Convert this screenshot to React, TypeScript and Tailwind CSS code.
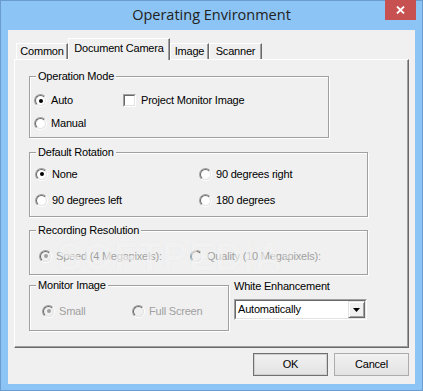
import React from "react";

function Radio({ checked = false, disabled = false }: { checked?: boolean; disabled?: boolean }) {
  return (
    <span className="inline-flex w-[13px] h-[13px] shrink-0 rounded-full border border-t-[#a0a0a0] border-l-[#a0a0a0] border-b-white border-r-white">
      <span
        className={
          disabled
            ? "flex-1 flex items-center justify-center rounded-full border border-t-[#696969] border-l-[#696969] border-b-[#e3e3e3] border-r-[#e3e3e3] bg-[#f0f0f0]"
            : "flex-1 flex items-center justify-center rounded-full border border-t-[#696969] border-l-[#696969] border-b-[#e3e3e3] border-r-[#e3e3e3] bg-white"
        }
      >
        {checked && (
          <span className={disabled ? "w-[4px] h-[4px] rounded-full bg-[#a0a0a0]" : "w-[4px] h-[4px] rounded-full bg-black"} />
        )}
      </span>
    </span>
  );
}

function RadioItem({ label, checked, disabled, className = "" }: { label: string; checked?: boolean; disabled?: boolean; className?: string }) {
  return (
    <div className={`flex items-center ${className}`}>
      <Radio checked={checked} disabled={disabled} />
      <span className={disabled ? "ml-[4px] text-[#a0a0a0]" : "ml-[4px]"}>{label}</span>
    </div>
  );
}

function Group({ title, className = "", children }: { title: string; className?: string; children?: React.ReactNode }) {
  return (
    <div className={`border border-[#a0a0a0] shadow-[inset_1px_1px_0_#fff,1px_1px_0_#fff] ${className}`}>
      <div className="-mt-[7px] ml-[6px] w-fit px-[2px] bg-[#f0f0f0] leading-[13px]">{title}</div>
      {children}
    </div>
  );
}

function Tab({ label, selected = false, w }: { label: string; selected?: boolean; w: string }) {
  if (selected) {
    return (
      <div
        className={`${w} h-[22px] -mb-[1px] relative z-10 bg-[#f0f0f0] border-t border-l border-white border-r border-r-[#696969] shadow-[inset_-1px_0_0_#a0a0a0] flex items-center justify-center pb-[2px]`}
      >
        {label}
      </div>
    );
  }
  return (
    <div
      className={`${w} h-[16px] bg-[#f0f0f0] border-t border-l border-white border-r border-r-[#696969] shadow-[inset_-1px_0_0_#a0a0a0] flex items-center justify-center`}
    >
      {label}
    </div>
  );
}

function Button({ label, isDefault = false }: { label: string; isDefault?: boolean }) {
  return (
    <div
      className={
        isDefault
          ? "w-[75px] h-[23px] flex items-center justify-center border border-[#707070] shadow-[inset_0_0_0_1px_#d0d0d0] bg-gradient-to-b from-[#f2f2f2] to-[#e2e2e2]"
          : "w-[75px] h-[23px] flex items-center justify-center border border-[#acacac] bg-gradient-to-b from-[#f2f2f2] to-[#e2e2e2]"
      }
    >
      {label}
    </div>
  );
}

export default function App() {
  return (
    <div className="relative w-[423px] h-[391px] bg-[#8cc4f5] border border-[#6a9bd1] flex flex-col font-['Liberation_Sans',Arial,sans-serif] text-[11px] tracking-[-0.2px] text-black">
      {/* Title bar */}
      <div className="h-[29px] flex items-start shrink-0">
        <div className="w-[37px]" />
        <div className="flex-1 text-center font-['Open_Sans',sans-serif] text-[14.5px] tracking-normal leading-[20px] mt-[4px] text-[#222]">
          Operating Environment
        </div>
        <div className="w-[31px] h-[20px] -mt-[1px] bg-[#c75050] flex items-center justify-center">
          <svg width="9" height="8" viewBox="0 0 9 8">
            <path d="M1 0.5 L8 7.5 M8 0.5 L1 7.5" stroke="#fff" strokeWidth="1.8" />
          </svg>
        </div>
        <div className="w-[6px]" />
      </div>

      {/* Client area */}
      <div className="flex-1 mx-[7px] mb-[6px] bg-[#f0f0f0] px-[6px] pt-[8px] flex flex-col">
        {/* Tabs */}
        <div className="h-[21px] flex items-end pl-[2px]">
          <Tab label="Common" w="w-[52px]" />
          <Tab label="Document Camera" w="w-[102px]" selected />
          <Tab label="Image" w="w-[39px]" />
          <Tab label="Scanner" w="w-[53px]" />
        </div>

        {/* Panel */}
        <div className="h-[289px] border-t border-l border-white border-r border-b border-r-[#696969] border-b-[#696969] shadow-[inset_-1px_-1px_0_#a0a0a0] pl-[14px] pt-[16px]">
          <Group title="Operation Mode" className="w-[300px] h-[62px]">
            <div className="mt-[6px] pl-[4px]">
              <div className="h-[23px] flex items-center">
                <RadioItem label="Auto" checked className="w-[89px]" />
                <div className="flex items-center">
                  <span className="w-[13px] h-[13px] border border-t-[#a0a0a0] border-l-[#a0a0a0] border-b-white border-r-white flex">
                    <span className="flex-1 border border-t-[#696969] border-l-[#696969] border-b-[#e3e3e3] border-r-[#e3e3e3] bg-white" />
                  </span>
                  <span className="ml-[5px]">Project Monitor Image</span>
                </div>
              </div>
              <div className="h-[23px] flex items-center">
                <RadioItem label="Manual" />
              </div>
            </div>
          </Group>

          <Group title="Default Rotation" className="w-[339px] h-[65px] mt-[14px]">
            <div className="mt-[2px] pl-[5px] grid grid-cols-[164px_1fr]">
              <div className="h-[26px] flex items-center"><RadioItem label="None" checked /></div>
              <div className="h-[26px] flex items-center"><RadioItem label="90 degrees right" /></div>
              <div className="h-[26px] flex items-center"><RadioItem label="90 degrees left" /></div>
              <div className="h-[26px] flex items-center"><RadioItem label="180 degrees" /></div>
            </div>
          </Group>

          <Group title="Recording Resolution" className="w-[339px] h-[45px] mt-[13px]">
            <div className="mt-[9px] pl-[9px] h-[20px] flex items-center">
              <RadioItem label="Speed (4 Megapixels):" checked disabled className="w-[151px]" />
              <RadioItem label="Quality (10 Megapixels):" disabled />
            </div>
          </Group>

          <div className="mt-[5px] flex items-start">
            <Group title="Monitor Image" className="w-[200px] h-[46px] mt-[5px]">
              <div className="mt-[9px] pl-[12px] h-[20px] flex items-center">
                <RadioItem label="Small" checked disabled className="w-[90px]" />
                <RadioItem label="Full Screen" disabled />
              </div>
            </Group>
            <div className="ml-[5px] flex flex-col">
              <div className="leading-[13px]">White Enhancement</div>
              <div className="mt-[6px] w-[133px] h-[21px] border border-t-[#a0a0a0] border-l-[#a0a0a0] border-b-white border-r-white flex">
                <div className="flex-1 border border-t-[#696969] border-l-[#696969] border-b-[#e3e3e3] border-r-[#e3e3e3] bg-white flex items-center">
                  <span className="flex-1 pl-[2px]">Automatically</span>
                  <div className="w-[17px] h-[17px] bg-[#f0f0f0] border border-t-[#e3e3e3] border-l-[#e3e3e3] border-b-[#696969] border-r-[#696969] shadow-[inset_1px_1px_0_#fff,inset_-1px_-1px_0_#a0a0a0] flex items-center justify-center">
                    <svg width="7" height="4" viewBox="0 0 7 4">
                      <path d="M0 0 H7 L3.5 4 Z" fill="#000" />
                    </svg>
                  </div>
                </div>
              </div>
            </div>
          </div>
        </div>

        {/* Buttons */}
        <div className="mt-[5px] flex justify-end gap-[6px]">
          <Button label="OK" isDefault />
          <Button label="Cancel" />
        </div>
      </div>

      {/* Watermark */}
      <div className="absolute left-[56px] top-[236px] pointer-events-none font-['Liberation_Sans',sans-serif] font-bold text-[38px] leading-[40px] tracking-[1px] text-white/60 [text-shadow:0_0_1px_rgba(0,0,0,0.08)]">
        SOFTPEDIA<span className="text-[12px] align-top">®</span>
      </div>
    </div>
  );
}
